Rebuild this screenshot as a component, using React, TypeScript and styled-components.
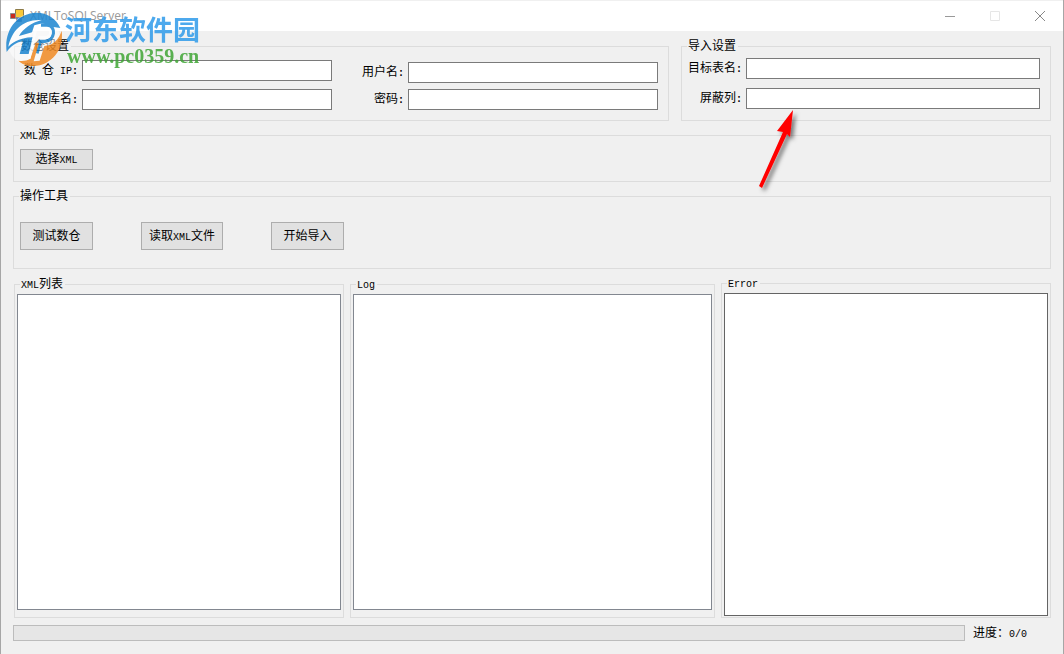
import React from "react";
import styled, { createGlobalStyle } from "styled-components";

const GlobalStyle = createGlobalStyle`
  * { box-sizing: border-box; }
  body {
    margin: 0;
    background: #f0f0f0;
    color: #000;
    font: 12px/14px "Liberation Mono", "Noto Sans CJK SC", monospace;
  }
`;

const Window = styled.div`
  position: relative;
  min-height: 100vh;
  display: flex;
  flex-direction: column;
  border-left: 1px solid #a6a6a6;
  border-right: 1px solid #a6a6a6;
`;

const TitleBar = styled.header`
  display: flex;
  align-items: center;
  height: 31px;
  padding: 0 1px 0 9px;
  background: #fff;
  border-top: 1px solid #f0f0f0;
`;

const Title = styled.h1`
  flex: 1;
  margin: 0 0 0 6px;
  color: #999;
  font: 12px/16px "Open Sans", "Noto Sans CJK SC", sans-serif;
`;

const CaptionButton = styled.button`
  display: flex;
  align-items: center;
  justify-content: center;
  width: 45px;
  height: 30px;
  padding: 0;
  border: 0;
  background: transparent;
`;

const Content = styled.main`
  flex: 1;
  display: flex;
  flex-direction: column;
  padding: 8px 12px 13px;
`;

const Group = styled.fieldset`
  position: relative;
  min-width: 0;
  margin: 0;
  padding: 0;
  border: 1px solid #dcdcdc;
`;

const Legend = styled.legend`
  height: 14px;
  margin-left: 5px;
  padding: 0 2px 0 1px;
  line-height: 16px;
`;

const Latin = styled.span`
  font-size: 10px;
`;

const Colon = styled(Latin)`
  font-weight: 700;
`;

const SettingsRow = styled.div`
  display: grid;
  grid-template-columns: 655fr 370fr;
  gap: 12px;
  height: 82px;
  padding-left: 1px;
`;

const FieldColumns = styled.div`
  display: grid;
  grid-template-columns: 308fr 298fr;
  gap: 28px;
  padding: 0 10px 0 9px;
`;

const FieldColumn = styled.div<{ $top: number; $gap: number }>`
  display: flex;
  flex-direction: column;
  gap: ${(p) => p.$gap}px;
  padding-top: ${(p) => p.$top}px;
`;

const ImportFields = styled(FieldColumn)`
  padding-right: 10px;
  padding-left: 6px;
`;

const Field = styled.label<{ $label: number }>`
  display: grid;
  grid-template-columns: ${(p) => p.$label}px 1fr;
  align-items: center;
  gap: 4px;
  text-align: right;
  white-space: pre;
`;

const FieldLabel = styled.span`
  padding-top: 2px;
`;

const TextBox = styled.input`
  width: 100%;
  min-width: 0;
  height: 21px;
  padding: 2px;
  border: 1px solid #7a7a7a;
  background: #fff;
  font: inherit;
`;

const SourceGroup = styled(Group)`
  height: 54px;
  margin-top: 7px;
`;

const ToolGroup = styled(Group)`
  height: 80px;
  margin-top: 7px;
`;

const PushButton = styled.button<{ $w: number; $h: number }>`
  width: ${(p) => p.$w}px;
  height: ${(p) => p.$h}px;
  padding: 2px 0 0;
  border: 1px solid #adadad;
  background: #e1e1e1;
  color: #000;
  font: inherit;
  white-space: nowrap;
`;

const Tools = styled.div<{ $top: number }>`
  display: flex;
  gap: 48px;
  padding: ${(p) => p.$top}px 6px 0;
`;

const Panels = styled.div`
  flex: 1;
  display: grid;
  grid-template-columns: 330fr 365fr 330fr;
  gap: 6px;
  margin-top: 8px;
  padding-left: 1px;
`;

const PanelGroup = styled(Group)`
  display: flex;
  padding: 3px 2px 7px;
`;

const PanelLegend = styled(Legend)`
  margin-left: 3px;
`;

const ErrorGroup = styled(PanelGroup)`
  margin-top: -1px;
  padding-bottom: 1px;
`;

const ListBox = styled.select`
  width: 100%;
  height: 100%;
  padding: 0;
  border: 1px solid #828790;
  border-radius: 0;
  background: #fff;
`;

const OutputBox = styled.textarea<{ $dark?: boolean }>`
  display: block;
  width: 100%;
  height: 100%;
  padding: 2px;
  border: 1px solid ${(p) => (p.$dark ? "#646464" : "#828790")};
  background: #fff;
  font: inherit;
  resize: none;
`;

const StatusRow = styled.footer`
  display: flex;
  align-items: center;
  gap: 8px;
  height: 16px;
  margin-top: 7px;
`;

const ProgressBar = styled.progress`
  flex: 1;
  height: 16px;
  appearance: none;
  border: 1px solid #bcbcbc;
  background: #e6e6e6;
  &::-webkit-progress-bar { background: #e6e6e6; }
  &::-webkit-progress-value { background: #06b025; }
`;

const ProgressText = styled.span`
  width: 78px;
  padding-top: 3px;
  white-space: nowrap;
`;

const Arrow = styled.svg`
  position: absolute;
  z-index: 1;
  top: 52px;
  left: 68px;
  overflow: visible;
  pointer-events: none;
`;

const Watermark = styled.div`
  position: absolute;
  z-index: 1;
  top: 0;
  left: 0;
  display: flex;
  opacity: 0.85;
  pointer-events: none;
`;

const WatermarkText = styled.div`
  display: flex;
  flex-direction: column;
  margin-top: 14px;
`;

const SiteName = styled.span`
  color: #2f9bea;
  font: 700 27px/30px "Noto Sans CJK SC", sans-serif;
`;

const SiteUrl = styled.span`
  margin-left: 2px;
  color: #3fa535;
  font: 700 20px/24px "Liberation Serif", serif;
`;

const FormIcon = () => (
  <svg width="14" height="14" viewBox="0 0 14 14" aria-hidden="true">
    <path d="M5.500 .5h8v8h-8z" fill="#f8c83a" stroke="#8c7b49" />
    <path d="M.5 4.500h5v5h-5z" fill="#c92b20" stroke="#8c8c8c" />
    <path d="M6.500 8.500h5v4h-5z" fill="#3d76d6" stroke="#8c8c8c" />
  </svg>
);

const SiteLogo = () => (
  <svg width="64" height="68" viewBox="0 0 192 204" aria-hidden="true">
    <circle cx="98" cy="120" r="80" fill="#fff" fillOpacity="0.6" />
    <path
      d="M17 156C8 90 48 40 106 38C140 38 166 56 178 84L152 80C136 68 116 70 100 76L88 112H100L84 162H56L66 124C48 126 30 138 17 156Z"
      fill="#1c86d1"
    />
    <path d="M22 140C32 92 66 56 122 60C92 68 66 86 54 108L96 96L90 112C62 114 40 122 22 140Z" fill="#fff" />
    <path d="M120 76H140C166 78 162 122 132 124H118L108 160" fill="none" stroke="#1c86d1" strokeWidth="10" />
    <path
      d="M182 92C190 148 152 196 98 198C78 198 62 192 52 182C66 184 78 182 88 176L104 128H114L98 184L116 182L130 138C156 136 174 118 182 92Z"
      fill="#f08a24"
    />
    <path d="M104 88L84 176M114 84H138C154 86 152 112 132 113H112" fill="none" stroke="#fff" strokeWidth="8" />
  </svg>
);

type FieldProps = { label: React.ReactNode; width: number; name: string; type?: string };

const LabeledField = ({ label, width, name, type = "text" }: FieldProps) => (
  <Field $label={width} htmlFor={name}>
    <FieldLabel>{label}<Colon>:</Colon></FieldLabel>
    <TextBox id={name} name={name} type={type} />
  </Field>
);

export default function App() {
  return (
    <>
      <GlobalStyle />
      <Window>
        <TitleBar>
          <FormIcon />
          <Title>XMLToSQLServer</Title>
          <CaptionButton aria-label="最小化">
            <svg width="10" height="10"><path d="M0 5.500h10" stroke="#999" /></svg>
          </CaptionButton>
          <CaptionButton aria-label="最大化" disabled>
            <svg width="10" height="10"><path d="M.5 .5h9v9h-9z" fill="none" stroke="#e6e6e6" /></svg>
          </CaptionButton>
          <CaptionButton aria-label="关闭">
            <svg width="10" height="10"><path d="M0 0l10 10M10 0L0 10" stroke="#888" /></svg>
          </CaptionButton>
        </TitleBar>
        <Content>
          <SettingsRow>
            <Group>
              <Legend>数仓设置</Legend>
              <FieldColumns>
                <FieldColumn $top={7} $gap={8}>
                  <LabeledField name="host" width={54} label={<>数<Latin> </Latin>仓<Latin> IP</Latin></>} />
                  <LabeledField name="database" width={54} label="数据库名" />
                </FieldColumn>
                <FieldColumn $top={9} $gap={6}>
                  <LabeledField name="user" width={44} label="用户名" />
                  <LabeledField name="password" width={44} label="密码" type="password" />
                </FieldColumn>
              </FieldColumns>
            </Group>
            <Group>
              <Legend>导入设置</Legend>
              <ImportFields $top={5} $gap={9}>
                <LabeledField name="table" width={54} label="目标表名" />
                <LabeledField name="masked" width={54} label="屏蔽列" />
              </ImportFields>
              <Arrow width="60" height="90" viewBox="0 0 60 90" aria-hidden="true">
                <defs>
                  <filter id="shadow" x="-30%" y="-30%" width="180%" height="180%">
                    <feDropShadow dx="3" dy="3" stdDeviation="2" floodColor="#000" floodOpacity="0.5" />
                  </filter>
                </defs>
                <path d="M43 5L27 26l6 1L9 81l3 2L37 29l3 3z" fill="#f00" filter="url(#shadow)" />
              </Arrow>
            </Group>
          </SettingsRow>

          <SourceGroup>
            <Legend><Latin>XML</Latin>源</Legend>
            <Tools $top={7}>
              <PushButton $w={73} $h={21}>选择<Latin>XML</Latin></PushButton>
            </Tools>
          </SourceGroup>

          <ToolGroup>
            <Legend>操作工具</Legend>
            <Tools $top={19}>
              <PushButton $w={73} $h={28}>测试数仓</PushButton>
              <PushButton $w={82} $h={28}>读取<Latin>XML</Latin>文件</PushButton>
              <PushButton $w={73} $h={28}>开始导入</PushButton>
            </Tools>
          </ToolGroup>

          <Panels>
            <PanelGroup>
              <PanelLegend><Latin>XML</Latin>列表</PanelLegend>
              <ListBox size={10} aria-label="XML列表" />
            </PanelGroup>
            <PanelGroup>
              <PanelLegend><Latin>Log</Latin></PanelLegend>
              <OutputBox aria-label="Log" />
            </PanelGroup>
            <ErrorGroup>
              <PanelLegend><Latin>Error</Latin></PanelLegend>
              <OutputBox $dark aria-label="Error" />
            </ErrorGroup>
          </Panels>

          <StatusRow>
            <ProgressBar value={0} max={1} aria-label="进度" />
            <ProgressText>进度：<Latin>0/0</Latin></ProgressText>
          </StatusRow>
        </Content>
        <Watermark>
          <SiteLogo />
          <WatermarkText>
            <SiteName>河东软件园</SiteName>
            <SiteUrl>www.pc0359.cn</SiteUrl>
          </WatermarkText>
        </Watermark>
      </Window>
    </>
  );
}
